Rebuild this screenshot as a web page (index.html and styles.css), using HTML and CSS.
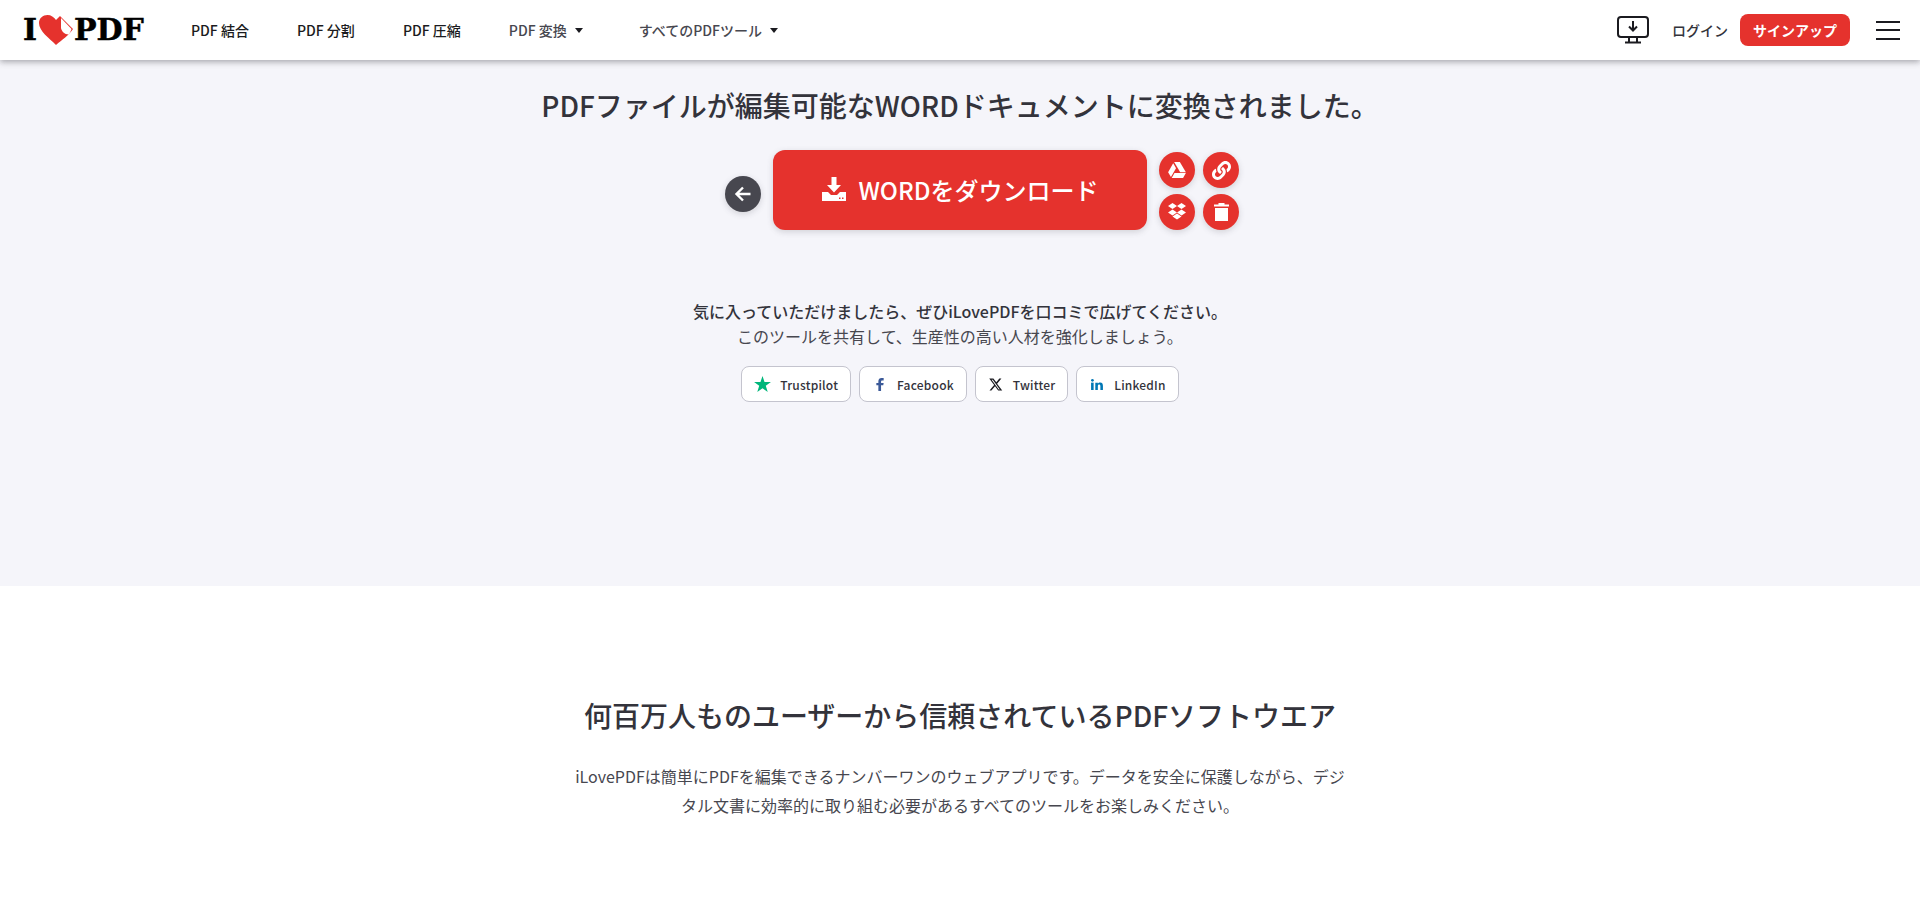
FILE: index.html
```html
<!DOCTYPE html>
<html lang="ja">
<head>
  <meta charset="UTF-8">
  <meta name="viewport" content="width=device-width, initial-scale=1.0">
  <title>iLovePDF</title>
  <link rel="stylesheet" href="styles.css">
</head>
<body>
  <header class="header">
    <a class="logo" href="#">
      <span>I</span>
      <svg class="logo-heart" viewBox="0 0 34 30" width="34" height="30">
        <path fill="#e5322d" d="M17 30C10 23 0 16 0 8C0 3 4 0 8.500 0C12 0 15 2 17 5L21 1L34 14C30 20 23 25 17 30Z"/>
        <path fill="#fff" d="M22 3V13C22.500 16 25.500 19.500 29.500 19.500C31 18 32 15.500 32.500 14Z"/>
      </svg>
      <span>PDF</span>
    </a>
    <nav class="nav">
      <a href="#">PDF 結合</a>
      <a href="#">PDF 分割</a>
      <a href="#">PDF 圧縮</a>
      <a href="#" class="nav-drop">PDF 変換</a>
      <a href="#" class="nav-drop">すべてのPDFツール</a>
    </nav>
    <div class="header-right">
      <svg class="desktop-icon" viewBox="0 0 32 28" width="32" height="28" fill="none" stroke="#1b1b20" stroke-width="2">
        <rect x="1" y="1" width="30" height="20" rx="3"/>
        <path d="M16 5V14M12 10.500L16 14.500L20 10.500"/>
        <path d="M12 21V26M20 21V26M8 26.500H24"/>
      </svg>
      <a href="#" class="login">ログイン</a>
      <a href="#" class="signup">サインアップ</a>
      <div class="burger"><i></i><i></i><i></i></div>
    </div>
  </header>

  <main>
    <section class="result">
      <h1>PDFファイルが編集可能なWORDドキュメントに変換されました。</h1>
      <div class="actions">
        <a href="#" class="circle back">
          <svg viewBox="0 0 18 18" width="18" height="18" fill="none" stroke="#fff" stroke-width="2.400"><path d="M16.500 9H3M9 2.500L2.500 9L9 15.500"/></svg>
        </a>
        <a href="#" class="download">
          <svg viewBox="0 0 24 24" width="24" height="24" fill="#fff">
            <path d="M9.500 0H14.500V8H19L12 15.500L5 8H9.500Z"/>
            <path fill-rule="evenodd" d="M0 15H6L9 18H15L18 15H24V24H0ZM17 20.500H18.500V22H17ZM20 20.500H21.500V22H20Z"/>
          </svg>
          <span>WORDをダウンロード</span>
        </a>
        <div class="tools">
          <a href="#" class="circle">
            <svg viewBox="0 0 20 18" width="18" height="16" fill="#fff"><path d="M6.800 0H13.200L20 11.500H13.600Z"/><path d="M5.700 1.500L8.900 7L3.200 17L0 11.500Z"/><path d="M7.200 12.500H20L16.800 18H4Z"/></svg>
          </a>
          <a href="#" class="circle">
            <svg viewBox="0 0 512 512" width="19" height="19" fill="#fff"><path d="M326.612 185.391c59.747 59.809 58.927 155.698.36 214.59-.11.12-.24.25-.36.37l-67.2 67.2c-59.27 59.27-155.699 59.262-214.96 0-59.27-59.26-59.27-155.7 0-214.96l37.106-37.106c9.84-9.84 26.786-3.3 27.294 10.606.648 17.722 3.826 35.527 9.69 52.721 1.986 5.822.567 12.262-3.783 16.612l-13.087 13.087c-28.026 28.026-28.905 73.66-1.155 101.96 28.024 28.579 74.086 28.749 102.325.51l67.2-67.19c28.191-28.191 28.073-73.757 0-101.83-3.701-3.694-7.429-6.564-10.341-8.569a16.037 16.037 0 0 1-6.947-12.606c-.396-10.567 3.348-21.456 11.698-29.806l21.054-21.055c5.521-5.521 14.182-6.199 20.584-1.731a152.482 152.482 0 0 1 20.522 17.197zM467.547 44.449c-59.261-59.262-155.69-59.27-214.96 0l-67.2 67.2c-.12.12-.25.25-.36.37-58.566 58.892-59.387 154.781.36 214.59a152.454 152.454 0 0 0 20.521 17.196c6.402 4.468 15.064 3.789 20.584-1.731l21.054-21.055c8.35-8.35 12.094-19.239 11.698-29.806a16.037 16.037 0 0 0-6.947-12.606c-2.912-2.005-6.64-4.875-10.341-8.569-28.073-28.073-28.191-73.639 0-101.83l67.2-67.19c28.239-28.239 74.3-28.069 102.325.51 27.75 28.3 26.872 73.934-1.155 101.96l-13.087 13.087c-4.35 4.35-5.769 10.79-3.783 16.612 5.864 17.194 9.042 34.999 9.69 52.721.509 13.906 17.454 20.446 27.294 10.606l37.106-37.106c59.271-59.259 59.271-155.699.001-214.959z"/></svg>
          </a>
          <a href="#" class="circle">
            <svg viewBox="0 0 20 19" width="20" height="19" fill="#fff"><path d="M5.500 0L10 3L5.500 6L1 3ZM14.500 0L19 3L14.500 6L10 3ZM5.500 6.500L10 9.500L5.500 12.500L1 9.500ZM14.500 6.500L19 9.500L14.500 12.500L10 9.500ZM5.500 13.500L10 10.500L14.500 13.500L10 16.500Z"/></svg>
          </a>
          <a href="#" class="circle">
            <svg viewBox="0 0 15 18" width="15" height="18" fill="#fff"><path d="M4.500 0H10.500V1.500H15V3.500H0V1.500H4.500Z"/><path d="M1 5H14V18H1Z"/></svg>
          </a>
        </div>
      </div>
      <p class="share-lead">気に入っていただけましたら、ぜひiLovePDFを口コミで広げてください。</p>
      <p class="share-sub">このツールを共有して、生産性の高い人材を強化しましょう。</p>
      <div class="share">
        <a href="#">
          <svg viewBox="0 0 20 19" width="17" height="16"><path fill="#00b67a" d="M10 0L12.400 7H20L13.900 11.500L16.200 19L10 14.400L3.800 19L6.100 11.500L0 7H7.600Z"/></svg>
          Trustpilot
        </a>
        <a href="#">
          <svg viewBox="0 0 10 16" width="16" height="13"><path fill="#3b5998" d="M3 16V9H.500V6H3V4C3 1.500 4.500 0 7 0H9.500V3H8C6.800 3 6.300 3.500 6.300 4.500V6H9.500L9 9H6.300V16Z"/></svg>
          Facebook
        </a>
        <a href="#">
          <svg viewBox="0 0 24 24" width="16" height="13"><path fill="#1b1b20" d="M18.200 1H22L14 10.500L23.500 23H16L10.200 15.300L3.500 23H0L8.500 13L-.500 1H7.200L12.500 8ZM17 21H19L6 3H3.900Z"/></svg>
          Twitter
        </a>
        <a href="#">
          <svg viewBox="0 0 14 13" width="16" height="11" fill="#0077b5"><circle cx="1.600" cy="1.600" r="1.600"/><rect x="0" y="4.300" width="3" height="8.700"/><path d="M5 4.300H8V5.500C8.500 4.700 9.500 4.100 10.800 4.100C13 4.100 14 5.500 14 8V13H11V8.500C11 7.300 10.500 6.600 9.500 6.600C8.500 6.600 8 7.300 8 8.500V13H5Z"/></svg>
          LinkedIn
        </a>
      </div>
    </section>

    <section class="about">
      <h2>何百万人ものユーザーから信頼されているPDFソフトウエア</h2>
      <p>iLovePDFは簡単にPDFを編集できるナンバーワンのウェブアプリです。データを安全に保護しながら、デジタル文書に効率的に取り組む必要があるすべてのツールをお楽しみください。</p>
    </section>
  </main>
</body>
</html>
```

FILE: styles.css
```css
html, body {
  margin: 0;
  height: 100%;
  overflow: hidden;
}

body {
  font-family: "Noto Sans CJK JP", "Noto Sans", sans-serif;
  color: #33333b;
  background-color: #fff;
}

a {
  color: inherit;
  text-decoration: none;
}

h1, h2, p {
  margin: 0;
}

.header {
  position: relative;
  display: flex;
  align-items: center;
  height: 60px;
  padding: 0 20px 0 23px;
  background-color: #fff;
  box-shadow: 0 2px 6px rgba(72, 72, 80, .45);
}

.logo {
  display: flex;
  align-items: center;
  width: 120px;
  color: #000;
  font-family: "DejaVu Serif", serif;
  font-weight: bold;
  font-size: 30px;
  line-height: 30px;
  -webkit-text-stroke: .5px #000;
}

.logo-heart {
  flex: none;
  margin: -1px 1px 0 2px;
}

.nav {
  display: flex;
  align-items: center;
  margin-left: 48px;
  font-size: 14px;
  font-weight: 500;
  color: #1b1b20;
}

.nav a {
  margin-right: 48px;
}

.nav .nav-drop {
  display: flex;
  align-items: center;
  margin-right: 56px;
  color: #47474f;
}

.nav-drop::after {
  content: "";
  margin-left: 8px;
  border-top: 5px solid #1b1b20;
  border-left: 4px solid transparent;
  border-right: 4px solid transparent;
}

.header-right {
  display: flex;
  align-items: center;
  margin-left: auto;
}

.login {
  margin-left: 23px;
  font-size: 14px;
  font-weight: 500;
}

.signup {
  display: flex;
  align-items: center;
  justify-content: center;
  width: 110px;
  height: 32px;
  margin-left: 12px;
  border-radius: 8px;
  background-color: #e5322d;
  color: #fff;
  font-size: 14px;
  font-weight: 700;
}

.burger {
  display: flex;
  flex-direction: column;
  gap: 6.500px;
  width: 24px;
  margin-left: 26px;
}

.burger i {
  height: 2px;
  background-color: #1b1b20;
}

.result {
  display: flex;
  flex-direction: column;
  align-items: center;
  height: 526px;
  background-color: #f5f5fa;
}

.result h1 {
  margin-top: 25px;
  font-size: 28px;
  font-weight: 500;
  line-height: 40px;
}

.actions {
  display: flex;
  align-items: center;
  gap: 12px;
  margin-top: 25px;
  margin-left: 44px;
}

.circle {
  display: flex;
  align-items: center;
  justify-content: center;
  width: 36px;
  height: 36px;
  border-radius: 50%;
  background-color: #e5322d;
  box-shadow: 0 2px 6px rgba(72, 72, 80, .2);
}

.back {
  margin-top: 8px;
  background-color: #47474f;
}

.download {
  display: flex;
  align-items: center;
  justify-content: center;
  gap: 13px;
  width: 374px;
  height: 80px;
  padding-bottom: 2px;
  box-sizing: border-box;
  border-radius: 12px;
  background-color: #e5322d;
  color: #fff;
  font-size: 24px;
  font-weight: 500;
  box-shadow: 0 2px 6px rgba(72, 72, 80, .2);
}

.tools {
  display: grid;
  grid-template-columns: 36px 36px;
  gap: 6px 8px;
  margin-top: 2px;
}

.share-lead {
  margin-top: 68px;
  font-size: 16px;
  font-weight: 500;
  line-height: 26px;
}

.share-sub {
  font-size: 16px;
  line-height: 24px;
  color: #47474f;
}

.share {
  display: flex;
  gap: 8px;
  margin-top: 18px;
}

.share a {
  display: flex;
  align-items: center;
  gap: 9px;
  height: 36px;
  padding: 0 12px;
  box-sizing: border-box;
  border: 1px solid #c4c4ce;
  border-radius: 8px;
  background-color: #fff;
  font-size: 12px;
  font-weight: 500;
  letter-spacing: .2px;
}

.about {
  display: flex;
  flex-direction: column;
  align-items: center;
  text-align: center;
}

.about h2 {
  margin-top: 109px;
  font-size: 28px;
  font-weight: 500;
  line-height: 40px;
}

.about p {
  width: 776px;
  margin-top: 27px;
  font-size: 16px;
  line-height: 29px;
  color: #47474f;
}
```
